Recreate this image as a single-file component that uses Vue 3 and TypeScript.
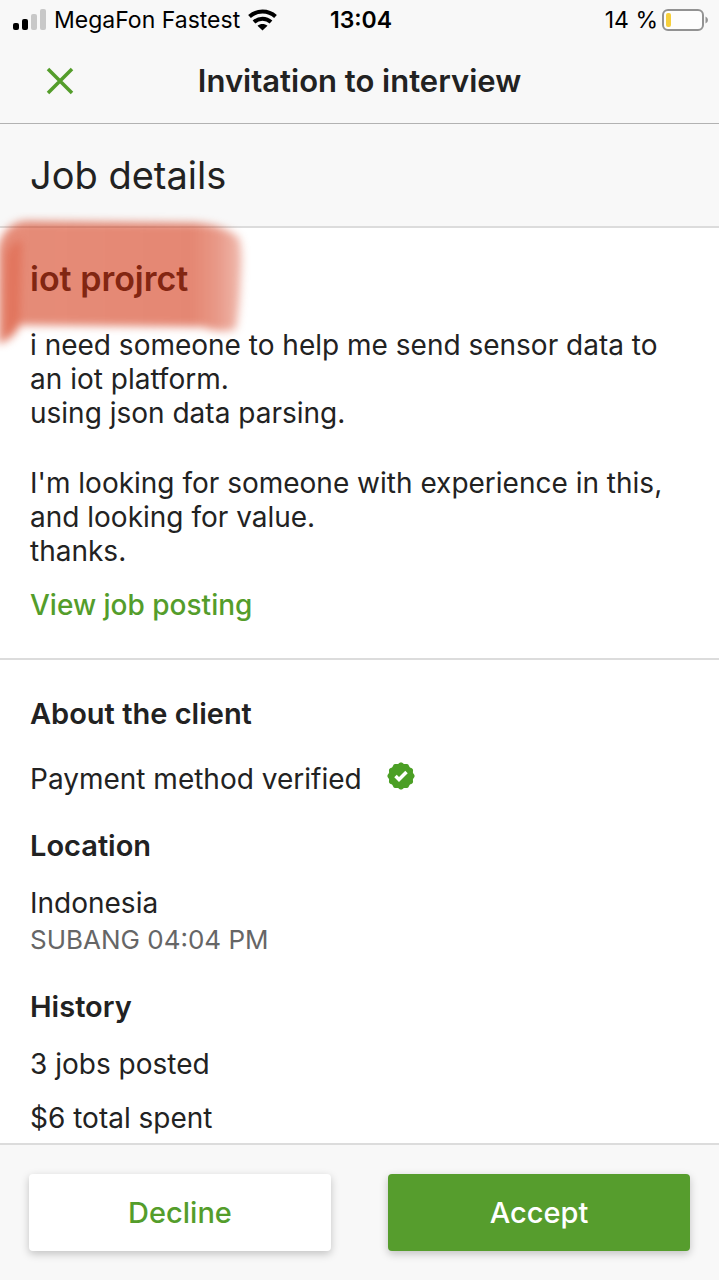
<script setup lang="ts">
const request: string[] = [
  'i need someone to help me send sensor data to an iot platform.',
  'using json data parsing.',
]
const closing: string[] = [
  "I'm looking for someone with experience in this, and looking for value.",
  'thanks.',
]
const history: string[] = ['3 jobs posted', '$6 total spent']

// Scalloped outline of the verification badge
const badge: string = Array.from({ length: 96 }, (_, i) => {
  const a = (i / 96) * Math.PI * 2
  const r = 13 + 0.6 * Math.cos(a * 12)
  return `${(14 + r * Math.cos(a)).toFixed(2)},${(14 + r * Math.sin(a)).toFixed(2)}`
}).join(' ')
</script>

<template>
  <div class="screen">
    <header class="top">
      <div class="status">
        <div class="carrier">
          <svg class="signal" width="33" height="22" viewBox="0 0 33 22" aria-hidden="true">
            <rect x="0" y="14" width="6" height="7" rx="2" />
            <rect x="9" y="10" width="6" height="11" rx="2" />
            <rect x="18" y="5" width="6" height="16" rx="2" fill="#c8c8c8" />
            <rect x="27" y="0" width="6" height="21" rx="2" fill="#c8c8c8" />
          </svg>
          <span>MegaFon Fastest</span>
          <svg width="29" height="22" viewBox="0 0 29 22" aria-hidden="true">
            <g fill="none" stroke="#000" stroke-width="4">
              <path d="M1.500 7.500C8.800 .8 20.200 .8 27.500 7.500" />
              <path d="M6 13C10.800 8.600 18.200 8.600 23 13" />
            </g>
            <path d="M9.500 16.800C12.300 14.300 16.700 14.300 19.500 16.800L14.500 21.500Z" />
          </svg>
        </div>
        <time class="clock">13:04</time>
        <div class="power">
          <span>14 %</span>
          <svg width="47" height="22" viewBox="0 0 47 22" aria-hidden="true">
            <rect x="1" y="1" width="40" height="20" rx="5" fill="#fdfdfd" stroke="#929292" stroke-width="2" />
            <rect x="4" y="4" width="5" height="14" rx="2" fill="#f6cf3c" />
            <path d="M43.500 7.500Q46 8.500 46 11T43.500 14.500Z" fill="#929292" />
          </svg>
        </div>
      </div>
      <div class="nav">
        <button class="close" type="button" aria-label="Close">
          <svg width="28" height="28" viewBox="0 0 28 28" aria-hidden="true">
            <path d="M2 2L26 26M26 2L2 26" fill="none" stroke="#549d2b" stroke-width="3.500" />
          </svg>
        </button>
        <h1>Invitation to interview</h1>
      </div>
    </header>

    <main>
      <div class="band"><h2>Job details</h2></div>

      <section class="job">
        <h3>iot projrct</h3>
        <svg class="marker" width="260" height="140" viewBox="0 0 260 140" aria-hidden="true">
          <defs>
            <filter id="soft" x="-20%" y="-20%" width="140%" height="140%" color-interpolation-filters="sRGB">
              <feGaussianBlur stdDeviation="4" />
            </filter>
            <linearGradient id="ink" x1="0" x2="1" y1="0" y2="0">
              <stop offset="0" stop-color="#d02a06" stop-opacity=".54" />
              <stop offset=".8" stop-color="#d02a06" stop-opacity=".56" />
              <stop offset=".9" stop-color="#d02a06" stop-opacity=".48" />
              <stop offset="1" stop-color="#d02a06" stop-opacity=".32" />
            </linearGradient>
          </defs>
          <g filter="url(#soft)">
            <path d="M-2 36Q3 12 25 9L195 11Q225 13 239 26Q243 38 241 64Q240 94 236 117Q223 122 202 115L20 113Q14 128 -2 132Z" fill="url(#ink)" />
            <path d="M6 44Q10 30 22 28L20 108Q16 120 5 125Z" fill="#d83a14" fill-opacity=".28" />
          </g>
        </svg>
        <div class="text">
          <p v-for="line in request" :key="line">{{ line }}</p>
        </div>
        <div class="text">
          <p v-for="line in closing" :key="line">{{ line }}</p>
        </div>
        <a class="posting" href="#posting">View job posting</a>
      </section>

      <section class="client">
        <h4>About the client</h4>
        <p class="verified">
          <span>Payment method verified</span>
          <svg width="28" height="28" viewBox="0 0 28 28" aria-hidden="true">
            <polygon :points="badge" fill="#4b9f25" />
            <path d="M8.500 14L12 17.500L19.500 10" fill="none" stroke="#fff" stroke-width="3.500" />
          </svg>
        </p>
        <h4>Location</h4>
        <p>Indonesia</p>
        <p class="muted">SUBANG 04:04 PM</p>
        <h4>History</h4>
        <p v-for="item in history" :key="item" class="stat">{{ item }}</p>
      </section>
    </main>

    <footer class="actions">
      <button class="action decline" type="button">Decline</button>
      <button class="action accept" type="button">Accept</button>
    </footer>
  </div>
</template>

<style>
body {
  margin: 0;
  background: #fff;
}
</style>

<style scoped>
.screen {
  display: flex;
  flex-direction: column;
  min-height: 100vh;
  overflow-x: clip;
  color: #222;
  font: 28px/34px Inter, "Liberation Sans", sans-serif;
}
h1, h2, h3, h4, p {
  margin: 0;
}
svg {
  display: block;
  flex: none;
}
button {
  font: inherit;
  cursor: pointer;
}
.top {
  background: #f8f8f8;
  border-bottom: 1px solid #b2b2b2;
}
.status {
  display: grid;
  grid-template-columns: 1fr auto 1fr;
  align-items: center;
  height: 40px;
  padding: 0 10px 0 13px;
  color: #000;
  font-size: 23px;
}
.carrier, .power {
  display: flex;
  align-items: center;
  gap: 8px;
  white-space: nowrap;
}
.power {
  justify-content: flex-end;
  gap: 4px;
}
.clock {
  font-weight: 600;
}
.nav {
  display: grid;
  grid-template-columns: 74px 1fr 74px;
  align-items: center;
  height: 81px;
  padding-bottom: 2px;
}
.close {
  justify-self: end;
  padding: 0;
  border: 0;
  background: none;
}
h1 {
  font-size: 31px;
  font-weight: 600;
  line-height: 40px;
  text-align: center;
}
.band {
  padding: 30px;
  background: #f8f8f8;
  border-bottom: 2px solid #dcdcdc;
}
h2 {
  font-size: 38px;
  font-weight: 400;
  line-height: 42px;
}
.job {
  position: relative;
  padding: 31px 30px 36px;
  border-bottom: 2px solid #dcdcdc;
}
h3 {
  margin-bottom: 29px;
  font-size: 34px;
  font-weight: 600;
  line-height: 40px;
}
.marker {
  position: absolute;
  top: -16px;
  left: 0;
  pointer-events: none;
}
.text {
  margin-bottom: 36px;
}
.posting {
  display: block;
  width: fit-content;
  margin-top: -16px;
  color: #549d2b;
  font-weight: 500;
  text-decoration: none;
}
.client {
  padding: 36px 30px 5px;
}
h4 {
  font-size: 29px;
  font-weight: 600;
  line-height: 36px;
}
.client h4 ~ h4 {
  margin-top: 32px;
}
.client h4 + p {
  margin-top: 22px;
}
.client .verified {
  display: flex;
  align-items: flex-start;
  gap: 25px;
  margin-top: 30px;
}
.muted {
  margin-top: 3px;
  color: #666;
  font-size: 26px;
}
.stat + .stat {
  margin-top: 20px;
}
.actions {
  position: sticky;
  bottom: 0;
  display: flex;
  gap: 57px;
  margin-top: auto;
  padding: 29px;
  background: #f8f8f8;
  border-top: 2px solid #dcdcdc;
}
.action {
  flex: 1;
  height: 77px;
  border: 0;
  border-radius: 4px;
  font-size: 29px;
  font-weight: 500;
  box-shadow: 0 3px 8px rgba(0, 0, 0, 0.22);
}
.decline {
  background: #fff;
  color: #549d2b;
}
.accept {
  background: #569d2d;
  color: #fff;
}
</style>
